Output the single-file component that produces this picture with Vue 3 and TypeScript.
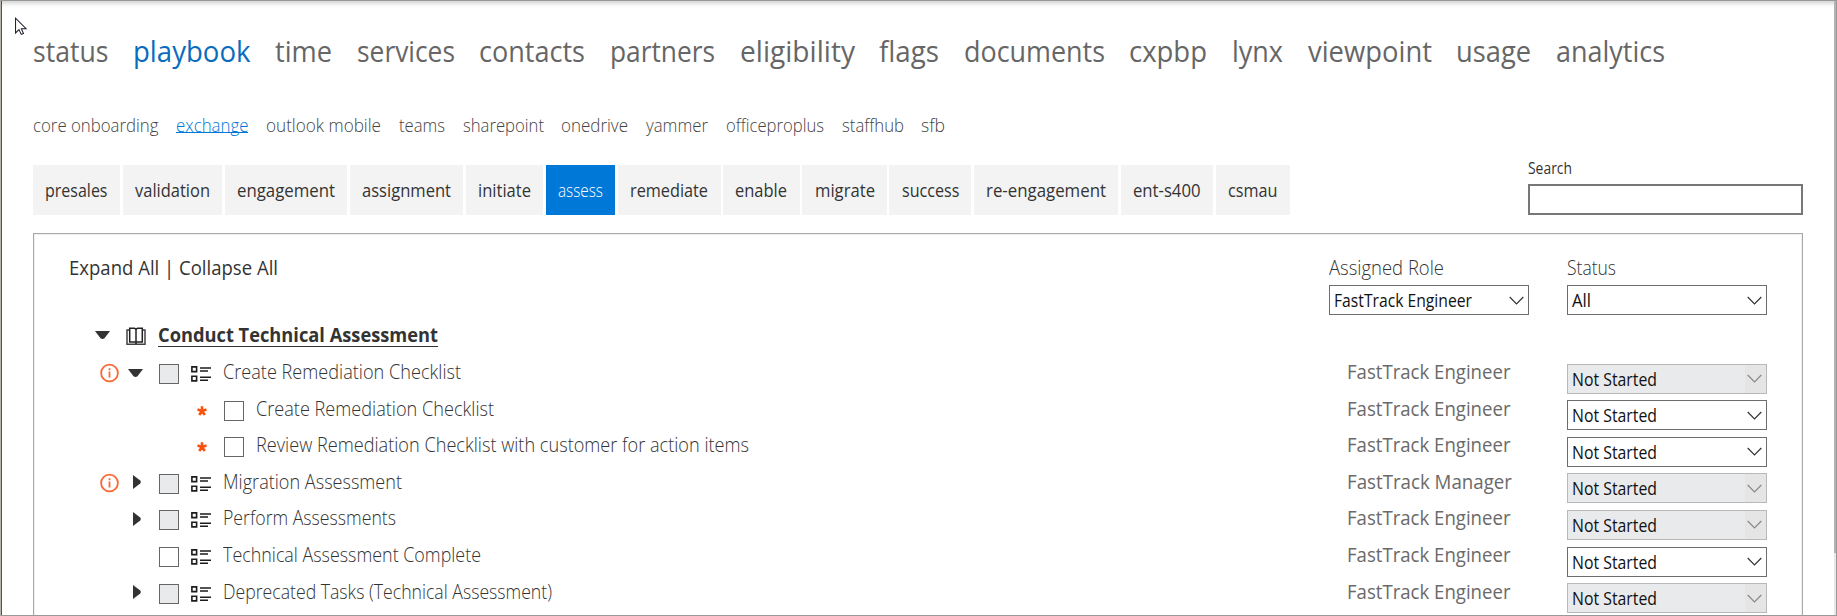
<script setup lang="ts">
import type { Directive } from 'vue'

interface Label {
  text: string
  width: number
}

interface Task {
  title: string
  width: number
  role: string
  roleWidth: number
  child?: boolean
  info?: boolean
  arrow?: 'open' | 'closed'
  locked?: boolean
}

/* Condenses a label horizontally so that it fills its measured width. */
const vFit: Directive<HTMLElement, number> = {
  mounted(el, { value }) {
    el.style.display = 'inline-block'
    const natural = el.getBoundingClientRect().width
    el.style.width = `${natural}px`
    el.style.flex = 'none'
    el.style.marginRight = `${value - natural}px`
    el.style.transformOrigin = '0 0'
    el.style.transform = `scaleX(${value / natural})`
  },
}

const sections: Label[] = [
  { text: 'status', width: 75.5 },
  { text: 'playbook', width: 117.5 },
  { text: 'time', width: 57 },
  { text: 'services', width: 98 },
  { text: 'contacts', width: 106 },
  { text: 'partners', width: 105 },
  { text: 'eligibility', width: 115 },
  { text: 'flags', width: 60 },
  { text: 'documents', width: 141 },
  { text: 'cxpbp', width: 78 },
  { text: 'lynx', width: 51 },
  { text: 'viewpoint', width: 124 },
  { text: 'usage', width: 75 },
  { text: 'analytics', width: 109 },
]

const workloads: Label[] = [
  { text: 'core onboarding', width: 125.5 },
  { text: 'exchange', width: 72.5 },
  { text: 'outlook mobile', width: 115 },
  { text: 'teams', width: 46 },
  { text: 'sharepoint', width: 81 },
  { text: 'onedrive', width: 67 },
  { text: 'yammer', width: 62 },
  { text: 'officeproplus', width: 98 },
  { text: 'staffhub', width: 62 },
  { text: 'sfb', width: 24 },
]

const stages: Label[] = [
  { text: 'presales', width: 62.5 },
  { text: 'validation', width: 75 },
  { text: 'engagement', width: 98 },
  { text: 'assignment', width: 89 },
  { text: 'initiate', width: 53 },
  { text: 'assess', width: 45 },
  { text: 'remediate', width: 78 },
  { text: 'enable', width: 52 },
  { text: 'migrate', width: 60 },
  { text: 'success', width: 57.5 },
  { text: 're-engagement', width: 120 },
  { text: 'ent-s400', width: 67.5 },
  { text: 'csmau', width: 49.5 },
]

const engineer = { role: 'FastTrack Engineer', roleWidth: 163.5 }
const manager = { role: 'FastTrack Manager', roleWidth: 165 }

const tasks: Task[] = [
  { title: 'Create Remediation Checklist', width: 238, ...engineer, info: true, arrow: 'open', locked: true },
  { title: 'Create Remediation Checklist', width: 238, ...engineer, child: true },
  { title: 'Review Remediation Checklist with customer for action items', width: 493, ...engineer, child: true },
  { title: 'Migration Assessment', width: 179, ...manager, info: true, arrow: 'closed', locked: true },
  { title: 'Perform Assessments', width: 173, ...engineer, arrow: 'closed', locked: true },
  { title: 'Technical Assessment Complete', width: 258, ...engineer },
  { title: 'Deprecated Tasks (Technical Assessment)', width: 329, ...engineer, arrow: 'closed', locked: true },
]
</script>

<template>
  <div class="window">
    <nav class="sections">
      <a v-for="s in sections" :key="s.text" :class="{ current: s.text === 'playbook' }"><span v-fit="s.width">{{ s.text }}</span></a>
    </nav>
    <nav class="workloads">
      <a v-for="w in workloads" :key="w.text" :class="{ current: w.text === 'exchange' }"><span v-fit="w.width">{{ w.text }}</span></a>
    </nav>
    <div class="toolbar">
      <nav class="stages">
        <a v-for="s in stages" :key="s.text" :class="{ current: s.text === 'assess' }"><span v-fit="s.width">{{ s.text }}</span></a>
      </nav>
      <label class="search">
        <span v-fit="44">Search</span>
        <input type="text" />
      </label>
    </div>

    <main class="panel">
      <header class="filters">
        <div class="toggles"><span v-fit="209">Expand All | Collapse All</span></div>
        <div class="filter">
          <div class="caption"><span v-fit="115">Assigned Role</span></div>
          <div class="select">
            <span v-fit="138">FastTrack Engineer</span>
            <svg class="chevron" viewBox="0 0 15 9"><path d="M.7 1 7.5 7.8 14.3 1" /></svg>
          </div>
        </div>
        <div class="filter">
          <div class="caption"><span v-fit="49">Status</span></div>
          <div class="select">
            <span v-fit="19">All</span>
            <svg class="chevron" viewBox="0 0 15 9"><path d="M.7 1 7.5 7.8 14.3 1" /></svg>
          </div>
        </div>
      </header>

      <div class="group">
        <svg class="down" viewBox="0 0 15 8"><path d="M0 0H15L9.5 7.2Q7.5 8.8 5.5 7.2Z" /></svg>
        <svg class="book" viewBox="0 0 20 18">
          <path class="cover" d="M3 3H1V17.2H19V3H17" />
          <path d="M3.7 1.2H8Q10 1.2 10 3V15H3.7ZM16.3 1.2H12Q10 1.2 10 3V15H16.3ZM10 15V17" />
        </svg>
        <b v-fit="280">Conduct Technical Assessment</b>
      </div>

      <div v-for="(t, i) in tasks" :key="i" class="task" :class="{ child: t.child }">
        <div class="marks">
          <svg v-if="t.info" class="info" viewBox="0 0 19 19">
            <circle cx="9.5" cy="9" r="8.4" />
            <path d="M9.5 7.6V13.6M9.5 4.2V6.2" />
          </svg>
          <svg v-if="t.child" class="star" viewBox="0 0 10 10">
            <path d="M5 5V.3M5 5 .5 3.6M5 5 9.5 3.6M5 5 2.2 9M5 5 7.8 9" />
          </svg>
        </div>
        <div class="twisty">
          <svg v-if="t.arrow === 'open'" class="down" viewBox="0 0 15 8"><path d="M0 0H15L9.5 7.2Q7.5 8.8 5.5 7.2Z" /></svg>
          <svg v-if="t.arrow === 'closed'" class="right" viewBox="0 0 8 14"><path d="M0 0 7.2 5.5Q8.6 7 7.2 8.5L0 14Z" /></svg>
        </div>
        <i class="box" :class="{ locked: t.locked }"></i>
        <svg v-if="!t.child" class="list" viewBox="0 0 20 16">
          <path d="M.9 .9H5.6V5.6H.9ZM.9 10.2H5.6V14.9H.9Z" />
          <path d="M9 2H20M9 5H17M9 11.2H20M9 14.2H17" />
        </svg>
        <div class="title"><span v-fit="t.width">{{ t.title }}</span></div>
        <div class="role"><span v-fit="t.roleWidth">{{ t.role }}</span></div>
        <div class="select" :class="{ locked: t.locked }">
          <span v-fit="85">Not Started</span>
          <svg class="chevron" viewBox="0 0 15 9"><path d="M.7 1 7.5 7.8 14.3 1" /></svg>
        </div>
      </div>
    </main>

    <div class="scrollbar"></div>
    <svg class="pointer" viewBox="0 0 13 20">
      <path d="M.6 1V17L4.3 13.4 6.8 18.6 9.2 17.6 6.9 12.4H12Z" />
    </svg>
  </div>
</template>

<style>
body {
  margin: 0;
  background: #fff;
  overflow: hidden;
}
</style>

<style scoped>
.window {
  position: relative;
  box-sizing: border-box;
  width: 1837px;
  height: 616px;
  overflow: hidden;
  padding: 0 33px 0 31px;
  border: 1px solid #999;
  border-left-color: #b9b3ad;
  box-shadow: inset 1px 0 #0868ae, inset 0 5px 5px -3px #ccc;
  font-family: 'Open Sans', 'Noto Sans', sans-serif;
  color: #333;
}
.window * {
  box-sizing: border-box;
}
span,
b {
  white-space: nowrap;
}
svg {
  display: block;
  flex: none;
  overflow: visible;
}
nav {
  display: flex;
}
.sections {
  gap: 24.6px;
  height: 103px;
  padding: 30px 0 0 1px;
  font-size: 29.5px;
  line-height: 40px;
  color: #666;
}
.sections .current {
  color: #0a6cbd;
}
.workloads {
  gap: 17.7px;
  height: 61px;
  padding: 8px 0 0 1px;
  font-size: 17.5px;
  font-weight: 300;
  line-height: 26px;
  color: #444;
}
.workloads .current {
  color: #0078d7;
}
.workloads .current span {
  box-shadow: inset 0 -1px #0078d7;
  height: 21px;
}
.toolbar {
  display: flex;
  justify-content: space-between;
  height: 68px;
  padding-left: 1px;
}
.stages {
  gap: 2.6px;
}
.stages a {
  height: 50px;
  padding: 0 12.25px;
  background: #f3f3f3;
  font-size: 17.5px;
  line-height: 51px;
}
.stages .current {
  background: #0078d7;
  color: #fff;
  font-weight: 300;
}
.search {
  display: flex;
  flex-direction: column;
  align-items: flex-start;
  width: 275px;
  font-size: 15.5px;
  line-height: 7px;
}
.search input {
  width: 275px;
  height: 31px;
  margin-top: 12px;
  border: 2px solid #777;
  background: #fff;
}
.panel {
  height: 400px;
  margin-left: 1px;
  padding: 16px 35px 0 35px;
  border: 1px solid #aaa;
  box-shadow: inset 0 0 0 1px #eee;
}
.filters {
  display: flex;
  gap: 38px;
  height: 71px;
}
.toggles {
  flex: 1;
  font-size: 19.5px;
  line-height: 35px;
}
.filter {
  width: 200px;
}
.caption {
  height: 35px;
  font-size: 19.5px;
  font-weight: 300;
  line-height: 35px;
}
.select {
  display: flex;
  align-items: center;
  justify-content: space-between;
  width: 200px;
  height: 30px;
  padding: 0 4px;
  border: 1px solid #6d6d6d;
  background: #fff;
  color: #111;
  font-size: 17.5px;
  line-height: 28px;
}
.task .select {
  margin-top: -0.4px;
}
.select.locked {
  border-color: #b8b8b8;
  background: linear-gradient(90deg, #e9eaec 177px, #e5e5e5 177px);
}
.chevron {
  width: 15px;
  height: 9px;
  fill: none;
  stroke: #333;
  stroke-width: 1.2;
}
.locked .chevron {
  stroke: #888;
}
.group {
  display: flex;
  align-items: center;
  height: 28px;
  margin-bottom: 15px;
  padding-left: 26px;
}
.group b {
  margin-left: 12px;
  border-bottom: 1px solid #333;
  font-size: 19.5px;
  font-weight: 700;
  line-height: 22px;
}
.down {
  width: 15px;
  height: 8px;
  fill: #333;
}
.right {
  width: 8px;
  height: 14px;
  margin-left: 5px;
  fill: #333;
}
.book {
  width: 20px;
  height: 18px;
  margin: 2px 0 0 16px;
  fill: none;
  stroke: #222;
  stroke-width: 1.5;
}
.book .cover {
  stroke: #444;
}
.task {
  display: flex;
  align-items: flex-start;
  height: 36.6px;
}
.marks {
  width: 59px;
  padding-left: 31px;
}
.child .marks {
  width: 128px;
  padding: 5px 0 0 128px;
}
.info {
  width: 19px;
  height: 19px;
  fill: none;
  stroke: #f76a35;
  stroke-width: 1.8;
}
.star {
  width: 10px;
  height: 10px;
  stroke: #f9520f;
  stroke-width: 2.6;
}
.twisty {
  display: flex;
  align-items: center;
  width: 31px;
  height: 17px;
}
.child .twisty {
  width: 27px;
}
.box {
  flex: none;
  width: 20px;
  height: 20px;
  border: 1px solid #666;
  background: #fff;
}
.box.locked {
  background: #e8eaec;
}
.list {
  width: 20px;
  height: 16px;
  margin: 2px 0 0 12px;
  fill: none;
  stroke: #1c1c1c;
  stroke-width: 1.6;
}
.title {
  flex: 1;
  padding-left: 12px;
  font-size: 19.5px;
  font-weight: 300;
  line-height: 16px;
}
.role {
  width: 200px;
  margin-right: 38px;
  text-align: center;
  font-size: 19.5px;
  line-height: 16px;
  color: #6a6a6a;
}
.scrollbar {
  position: absolute;
  top: 0;
  right: 0;
  width: 2px;
  height: 614px;
  background: linear-gradient(#b4b4b4 552px, #e8e8e8 552px);
}
.pointer {
  position: absolute;
  top: 16px;
  left: 14px;
  width: 12px;
  height: 19px;
  fill: #fff;
  stroke: #1b1b2b;
  stroke-width: 1.1;
}
</style>
